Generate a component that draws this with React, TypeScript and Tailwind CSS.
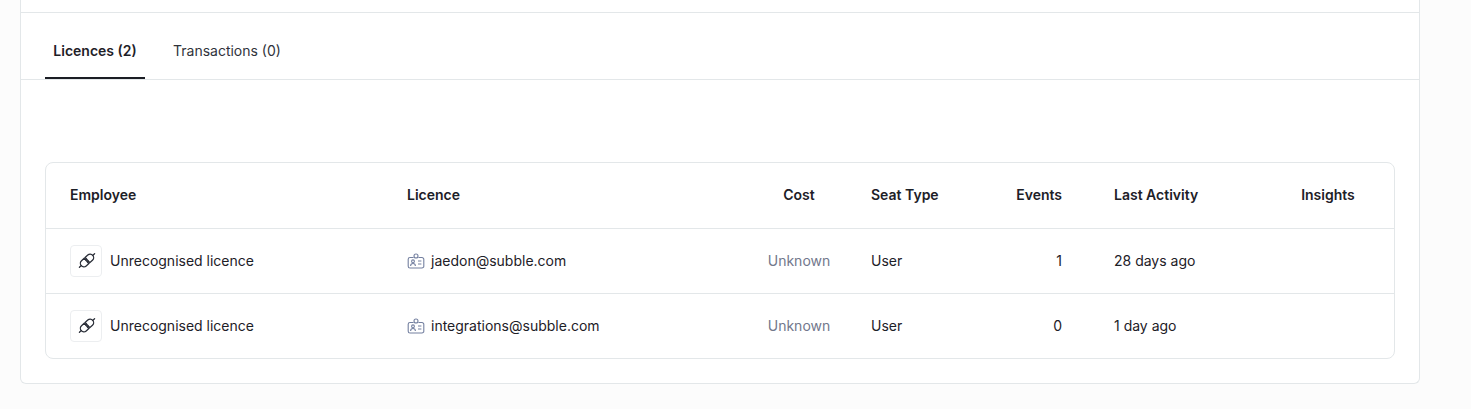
import React from "react";

const rows = [
  { email: "jaedon@subble.com", events: 1, last: "28 days ago" },
  { email: "integrations@subble.com", events: 0, last: "1 day ago" },
];

const gridCols = "grid grid-cols-[337px_361px_110px_120px_112px_172px_1fr] items-center";

function PlugIcon() {
  return (
    <svg viewBox="0 0 20 20" fill="none" stroke="#2a2e38" strokeWidth="1.3" strokeLinecap="round" className="h-5 w-5 shrink-0">
      <g transform="rotate(-42 11 9.5)">
        <path d="M.8 9.5h2.6" />
        <path d="M10.4 6H6.8a3.5 3.5 0 0 0 0 7h3.6z" />
        <path d="M11.6 6h3.6a3.5 3.5 0 0 1 0 7h-3.6z" />
        <path d="M18.6 9.5h2.6" />
        <path d="M10.4 8h1.2M10.4 11h1.2" />
      </g>
    </svg>
  );
}

function BadgeIcon() {
  return (
    <svg viewBox="0 0 18 18" fill="none" stroke="#7480a0" strokeWidth="1.1" className="h-[18px] w-[18px] shrink-0">
      <path d="M6.6 5.5H3a1.8 1.8 0 0 0-1.8 1.8v6.9A1.8 1.8 0 0 0 3 16h12a1.8 1.8 0 0 0 1.8-1.8V7.3A1.8 1.8 0 0 0 15 5.5h-3.6" />
      <circle cx="9" cy="4" r="2" />
      <circle cx="6" cy="9.3" r="1.4" />
      <path d="M3.6 14c0-1.6 1-2.5 2.4-2.5s2.4.9 2.4 2.5" />
      <path d="M11 9h3.4M11 12h3.4" />
    </svg>
  );
}

export default function App() {
  return (
    <div className="h-[409px] overflow-hidden bg-[#fcfcfc] pl-5 pr-[51px] font-['Inter',sans-serif] text-sm text-[#1d2027]">
      <div className="rounded-b-md border-x border-b border-[#e3e7e9] bg-white">
        <div className="h-[13px] border-b border-[#e3e7e9]" />

        {/* Tabs */}
        <div className="flex h-[67px] gap-3 border-b border-[#e3e7e9] px-6">
          <button className="h-[66px] w-[100px] border-b-2 border-[#1b1d24] pt-[11px] font-semibold">
            Licences (2)
          </button>
          <button className="h-[66px] px-4 pt-[9px] text-[#30333b]">Transactions (0)</button>
        </div>

        <div className="px-6 pb-6 pt-[82px]">
          <div className="overflow-hidden rounded-lg border border-[#e3e7e9]">
            <div className={`${gridCols} h-[65px] pb-0.5 font-semibold`}>
              <div className="pl-6">Employee</div>
              <div className="pl-6">Licence</div>
              <div className="text-center">Cost</div>
              <div className="pl-[17px]">Seat Type</div>
              <div className="pr-6 text-right">Events</div>
              <div className="pl-7">Last Activity</div>
              <div className="pl-1 text-center">Insights</div>
            </div>
            {rows.map((row) => (
              <div key={row.email} className={`${gridCols} h-[65px] border-t border-[#e3e7e9]`}>
                <div className="flex items-center gap-2 pl-6">
                  <div className="flex h-8 w-8 items-center justify-center rounded border border-[#eceef0] bg-white">
                    <PlugIcon />
                  </div>
                  <span>Unrecognised licence</span>
                </div>
                <div className="flex items-center gap-1.5 pl-6">
                  <BadgeIcon />
                  <span>{row.email}</span>
                </div>
                <div className="text-center text-[#72788c]">Unknown</div>
                <div className="pl-[17px]">User</div>
                <div className="pr-6 text-right">{row.events}</div>
                <div className="pl-7">{row.last}</div>
                <div />
              </div>
            ))}
          </div>
        </div>
      </div>
    </div>
  );
}
